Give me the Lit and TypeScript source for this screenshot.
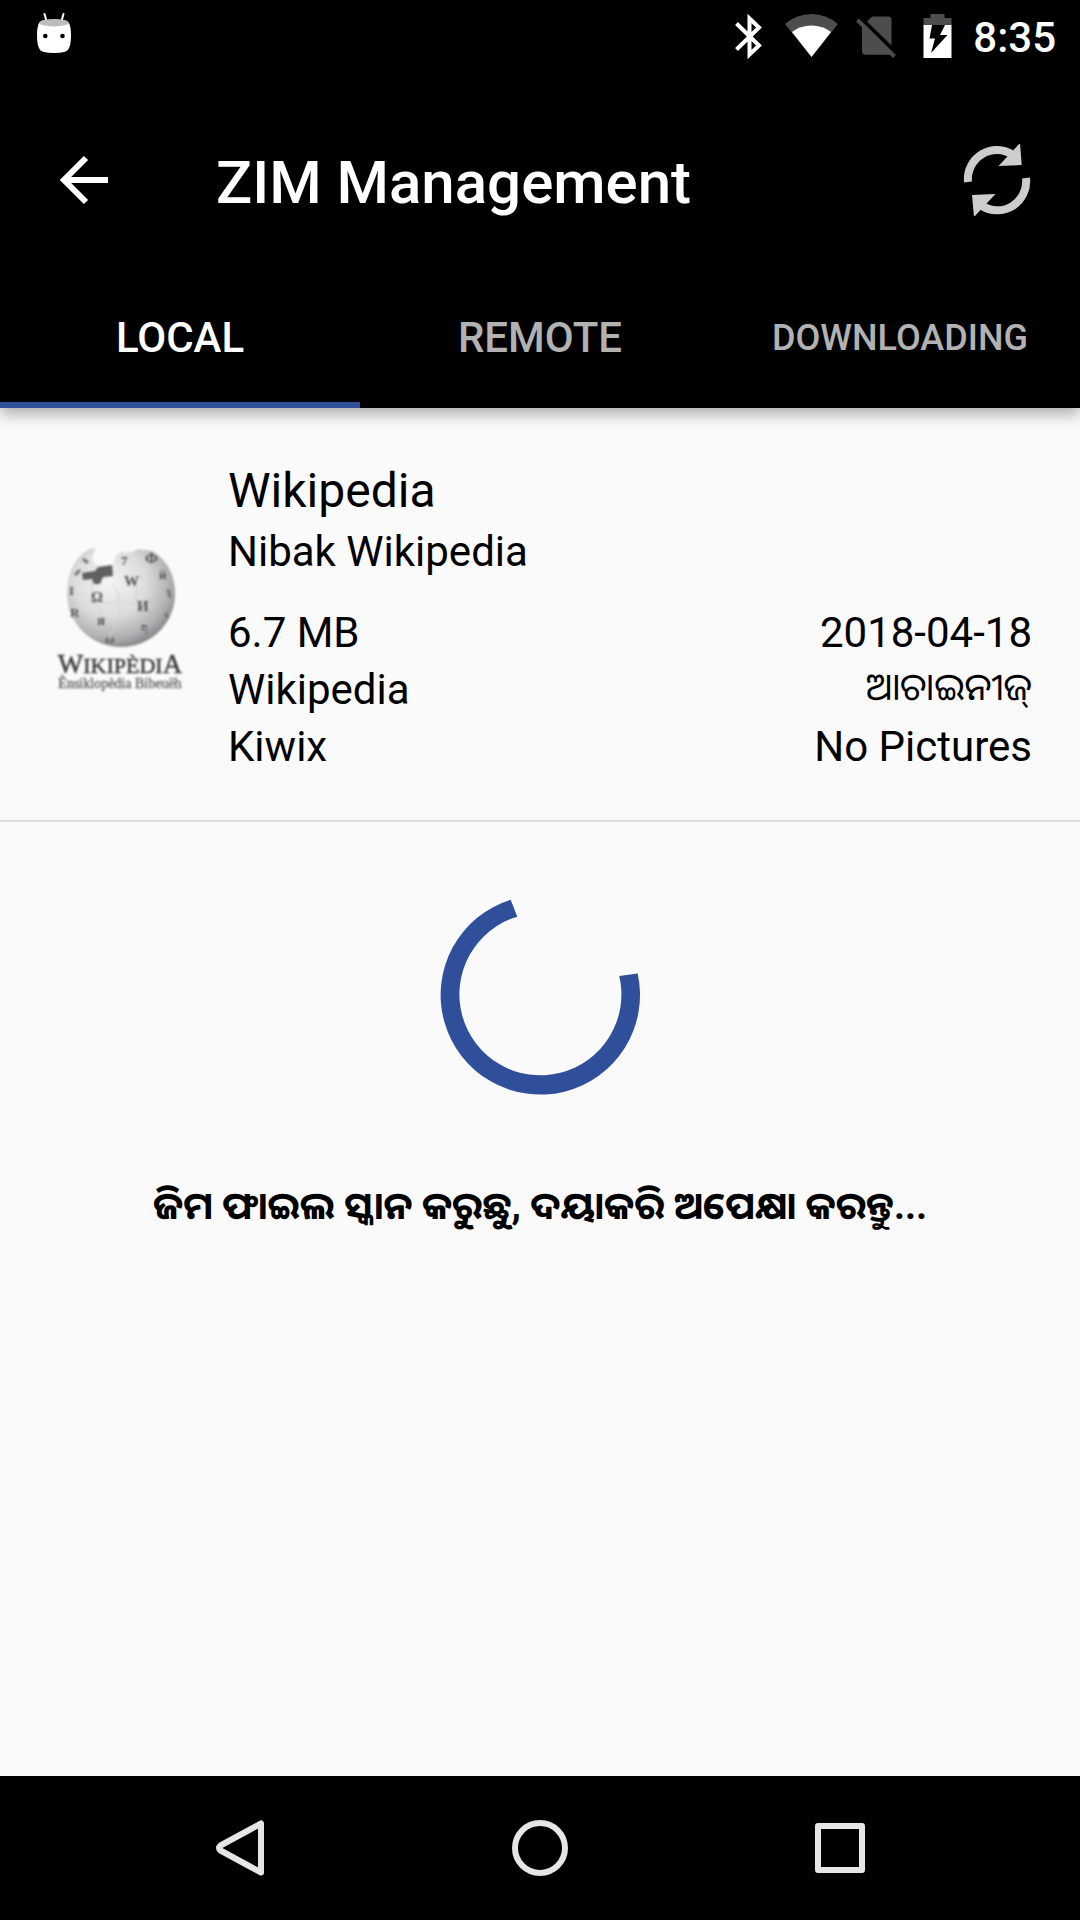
import { LitElement, html, css, svg } from "lit";
import { customElement, state } from "lit/decorators.js";

@customElement("status-bar")
class StatusBar extends LitElement {
  static styles = css`
    :host { display: block; background: #000; color: #fff; }
    .bar { display: flex; align-items: center; height: 72px; padding: 0 24px 0 30px; }
    .spacer { flex: 1; }
    .icon { display: block; width: 48px; height: 72px; }
    .wifi { width: 72px; }
    .clock { font-size: 42px; line-height: 48px; font-weight: 500; padding: 3px 0 0 12px; }
  `;
  render() {
    return html`<div class="bar">
      <svg class="icon" viewBox="30 0 48 72" aria-hidden="true">
        <path d="M44.500 14 L46.500 21 M63.500 14 L61.500 21" stroke="#fff" stroke-width="2" stroke-linecap="round" />
        <path d="M39 23 Q37 27 37 35 Q37 45 39.500 49 Q41 53 54 53 Q67 53 68.500 49 Q71 45 71 35 Q71 27 69 23 Z" fill="#fff" />
        <ellipse cx="54" cy="22.700" rx="14.800" ry="3.700" fill="#bdbdbd" />
        <circle cx="45.300" cy="36" r="2.300" /><circle cx="62.500" cy="36" r="2.300" />
      </svg>
      <span class="spacer"></span>
      <svg class="icon" viewBox="722 0 48 72" aria-hidden="true">
        <path d="M737.500 23.500 L760 45.500 L750.500 54.500 V18.500 L760 27.500 L737.500 49.500" fill="none" stroke="#fff" stroke-width="4" />
      </svg>
      <svg class="icon wifi" viewBox="769 0 72 72" aria-hidden="true">
        <path d="M785 24 Q797 14 811.500 14 Q826 14 838 24 L811.500 57 Z" fill="#4d4d4d" />
        <path d="M792 32 Q800 25.500 811.500 25.500 Q823 25.500 831 32 L811.500 57 Z" fill="#fff" />
      </svg>
      <svg class="icon wifi" viewBox="841 0 72 72" aria-hidden="true">
        <path d="M867 21.500 L872 16.500 H888 Q891.500 16.500 891.500 20 V45.500 Z M862 25.500 L890.500 54.200 Q889.500 54.700 888 54.700 H865.500 Q862 54.700 862 51 Z" fill="#4d4d4d" />
        <path d="M857.500 20 L894.500 56.500" stroke="#4d4d4d" stroke-width="4" />
      </svg>
      <svg class="icon" viewBox="913 0 48 72" aria-hidden="true">
        <path d="M923.500 18 H930.500 V14 H944.500 V18 H951.500 V26 H923.500 Z" fill="#4d4d4d" />
        <path d="M923.500 25 H951.500 V58 H923.500 Z" fill="#fff" />
        <path d="M932 25 H945 L940 35 H947.500 L931 53 L935 38.500 H929.500 Z" fill="#000" />
      </svg>
      <time class="clock">8:35</time>
    </div>`;
  }
}

@customElement("book-logo")
class BookLogo extends LitElement {
  static styles = css`
    :host { display: block; }
    .logo { display: block; width: 144px; height: 160px; }
    .soft { filter: blur(1px); }
    .name { font: 27px "Liberation Serif", serif; fill: #3c3c3c; stroke: #3c3c3c; stroke-width: 0.5px; }
    .small { font-size: 22px; }
    .tag { font: 14px "Liberation Serif", serif; fill: #555; stroke: #777; stroke-width: 0.5px; }
    .glyph { font: bold 15px "Liberation Serif", serif; fill: #555; }
    .tiny { font-size: 13px; }
  `;
  render() {
    return html`<svg class="logo" viewBox="48 537 144 160" role="img" aria-label="Wikipèdia">
      <defs>
        <radialGradient id="globe" cx="0.4" cy="0.35" r="0.68">
          <stop offset="0" stop-color="#f5f5f5" />
          <stop offset="0.5" stop-color="#dcdcdc" />
          <stop offset="0.82" stop-color="#b0b0b3" />
          <stop offset="1" stop-color="#848488" />
        </radialGradient>
      </defs>
      <g class="soft">
        <path d="M82 554 Q92 547 95 549 L92 558 Q94 567 104 567 L113 565 L116 555 L122 552 Q132 554 138 549 L152 551 Q175 565 175 594 A54 53 0 0 1 67 594 Q67 568 82 554 Z" fill="url(#globe)" />
        <path d="M82 573 L95 571 L98 567 L112 565 L113 576 L103 577 L100 584 L94 584 L92 579 L83 580 Z" fill="#606060" />
        <path d="M92 580 V602 Q100 604 101 612 Q96 621 84 622 M101 603 Q112 605 119 599 Q118 589 111 584 M119 600 L136 604 M119 602 V625 Q111 629 109 640 M136 578 V602 Q145 610 156 607 M136 578 Q151 576 157 567" fill="none" stroke="#d0d0d0" stroke-width="1" />
        <text class="glyph" x="91" y="602">Ω</text>
        <text class="glyph" x="124" y="586">W</text>
        <text class="glyph" x="137" y="611">И</text>
        <text class="glyph" x="97" y="625">я</text>
        <text class="glyph tiny" x="141" y="632">ף</text>
        <text class="glyph tiny" x="121" y="565">7</text>
        <text class="glyph" x="145" y="563">Ф</text>
        <text class="glyph tiny" x="159" y="579">й</text>
        <text class="glyph tiny" x="69" y="595">I</text>
        <text class="glyph tiny" x="70" y="617">R</text>
        <text class="glyph tiny" x="105" y="643">ω</text>
        <path d="M75 575 l5 -5 M83 559 l5 4 M168 589 l2 9 M165 613 l3 5" stroke="#777" stroke-width="3" />
        <text class="name" x="120" y="673" text-anchor="middle">W<tspan class="small">IKIPÈDI</tspan>A</text>
        <text class="tag" x="120" y="688" text-anchor="middle">Ènsiklopèdia Bibeuëh</text>
      </g>
    </svg>`;
  }
}

@customElement("book-row")
class BookRow extends LitElement {
  static styles = css`
    :host { display: block; }
    .row { display: flex; align-items: center; gap: 36px; padding: 51px 48px 45px; border-bottom: 2px solid #dedede; color: #000; }
    .text { flex: 1; min-width: 0; display: flex; flex-direction: column; gap: 24px; }
    .name { margin: 0; font-size: 48px; line-height: 64px; font-weight: 400; }
    .desc { margin: 0; font-size: 42px; line-height: 57px; }
    .facts { display: grid; grid-template-columns: auto auto; grid-auto-rows: 57px; font-size: 42px; line-height: 57px; }
    .end { text-align: right; }
    .oriya { font-size: 38px; line-height: 52px; }
  `;
  render() {
    return html`<article class="row">
      <book-logo></book-logo>
      <div class="text">
        <div>
          <h2 class="name">Wikipedia</h2>
          <p class="desc">Nibak Wikipedia</p>
        </div>
        <div class="facts">
          <span>6.7 MB</span><span class="end">2018-04-18</span>
          <span>Wikipedia</span><span class="end oriya" lang="or">ଆଚାଇନୀଜ୍</span>
          <span>Kiwix</span><span class="end">No Pictures</span>
        </div>
      </div>
    </article>`;
  }
}

@customElement("nav-keys")
class NavKeys extends LitElement {
  static styles = css`
    :host { display: block; background: #000; }
    .keys { display: flex; justify-content: center; height: 144px; }
    .key { flex: 0 1 300px; display: grid; place-items: center; padding: 0; border: 0; background: none; color: #e6e6e6; }
    .icon { display: block; width: 72px; height: 72px; fill: none; stroke: currentColor; stroke-width: 6; stroke-linejoin: round; }
  `;
  render() {
    const key = (label: string, shape: unknown) => html`<button class="key" aria-label=${label}>
      <svg class="icon" viewBox="0 0 72 72">${shape}</svg>
    </button>`;
    return html`<nav class="keys">
      ${key("Back", svg`<path d="M57 11.500 V60.500 L16.500 38.500 Q13.500 36 16.500 33.500 Z" />`)}
      ${key("Home", svg`<circle cx="36" cy="36" r="25" />`)}
      ${key("Overview", svg`<rect x="14" y="14" width="44" height="44" />`)}
    </nav>`;
  }
}

@customElement("app-root")
class AppRoot extends LitElement {
  @state() private active = 0;
  private tabs = ["LOCAL", "REMOTE", "DOWNLOADING"];

  static styles = css`
    :host { display: flex; flex-direction: column; min-height: 100vh; background: #fafafa; font-family: Roboto, "Noto Sans Oriya", "Noto Sans", sans-serif; }
    .header { background: #000; box-shadow: 0 6px 14px rgba(0, 0, 0, 0.32); }
    .toolbar { display: flex; align-items: center; height: 168px; padding: 0 48px; margin-top: 24px; box-sizing: border-box; }
    .top { display: flow-root; }
    .action { display: block; padding: 0; border: 0; background: none; color: #fff; }
    .icon { display: block; width: 72px; height: 72px; }
    .title { flex: 1; margin: 0; padding: 6px 0 0 96px; font-size: 60px; line-height: 72px; font-weight: 500; color: #fff; }
    .tabs { display: grid; grid-template-columns: repeat(3, 1fr); height: 144px; }
    .tab { border: 0; border-bottom: 6px solid transparent; background: none; padding: 9px 0 0; font-family: inherit; font-size: 42px; line-height: 48px; font-weight: 500; color: #b2b2b2; }
    .tab.long { font-size: 36px; }
    .tab.active { color: #fff; border-bottom-color: #304f9b; }
    .main { flex: 1; }
    .loading { display: flex; flex-direction: column; align-items: center; gap: 77px; padding: 71px 48px; }
    .spinner { display: block; width: 204px; height: 204px; }
    .message { margin: 0; font-size: 38px; line-height: 64px; font-weight: 700; text-align: center; color: #000; }
  `;

  render() {
    return html`
      <header class="header">
        <status-bar></status-bar>
        <div class="top">
          <div class="toolbar">
            <button class="action" aria-label="Back">
              <svg class="icon" viewBox="48 144 72 72">
                <path d="M108 180 H64 M86 158 L64 180 L86 202" fill="none" stroke="currentColor" stroke-width="6" />
              </svg>
            </button>
            <h1 class="title">ZIM Management</h1>
            <button class="action" aria-label="Refresh">
              <svg class="icon" viewBox="960 144 72 72">
                <g fill="none" stroke="#cdcdcd" stroke-width="8">
                  <path d="M968 182 A29 29 0 0 1 1013 155" />
                  <path d="M1026 178 A29 29 0 0 1 982 206" />
                </g>
                <path d="M1020 143 L1021.700 165 L998.500 166 Z M972 195 L995.500 194 L974 217 Z" fill="#cdcdcd" />
              </svg>
            </button>
          </div>
        </div>
        <div class="tabs" role="tablist">
          ${this.tabs.map((name, i) => html`<button role="tab"
            aria-selected=${i === this.active}
            class="tab ${i === this.active ? "active" : ""} ${name.length > 8 ? "long" : ""}"
            @click=${() => (this.active = i)}>${name}</button>`)}
        </div>
      </header>
      <main class="main">
        <book-row></book-row>
        <section class="loading" role="status">
          <svg class="spinner" viewBox="-102 -102 204 204" aria-hidden="true">
            <path d="M-29.300 -95.300 A99.700 99.700 0 1 0 97.700 -21.500 L79.300 -19 A81 81 0 1 1 -22.700 -78.300 Z" fill="#304f9b" />
          </svg>
          <p class="message" lang="or">ଜିମ ଫାଇଲ ସ୍କାନ କରୁଛୁ, ଦୟାକରି ଅପେକ୍ଷା କରନ୍ତୁ...</p>
        </section>
      </main>
      <nav-keys></nav-keys>
    `;
  }
}
